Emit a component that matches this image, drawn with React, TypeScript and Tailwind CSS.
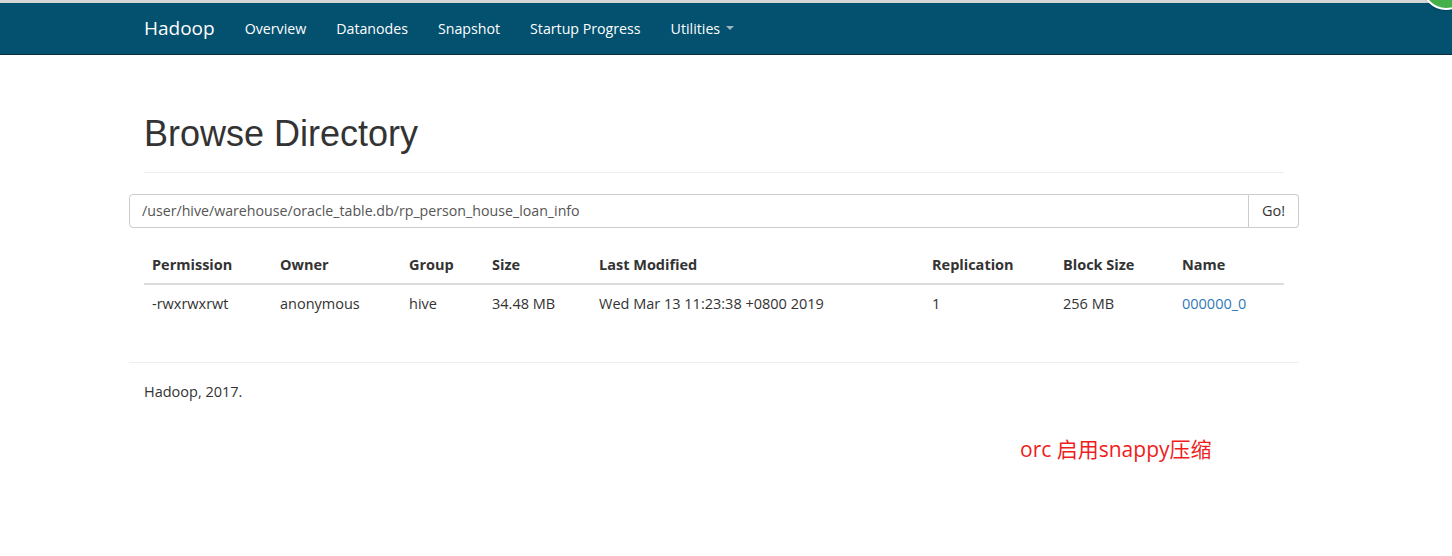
import React from "react";

const cols = [
  { label: "Permission", value: "-rwxrwxrwt", w: "w-[128px]" },
  { label: "Owner", value: "anonymous", w: "w-[129px]" },
  { label: "Group", value: "hive", w: "w-[83px]" },
  { label: "Size", value: "34.48 MB", w: "w-[107px]" },
  { label: "Last Modified", value: "Wed Mar 13 11:23:38 +0800 2019", w: "w-[333px]" },
  { label: "Replication", value: "1", w: "w-[131px]" },
  { label: "Block Size", value: "256 MB", w: "w-[119px]" },
  { label: "Name", value: "000000_0", w: "" },
];

const navItems = ["Overview", "Datanodes", "Snapshot", "Startup Progress"];

export default function App() {
  return (
    <div className="relative min-h-[556px] w-full overflow-hidden bg-white text-[#333] font-['Open_Sans','Noto_Sans',sans-serif] text-[14.5px]">
      {/* navbar */}
      <nav className="h-[55px] border-t-[3px] border-t-[#d6d6d6] border-b border-b-[#0a2f40] bg-[#03506f]">
        <div className="ml-[129px] flex h-full items-center px-[15px] text-white">
          <span className="mr-[15px] text-[19px]">Hadoop</span>
          {navItems.map((item) => (
            <span key={item} className="px-[15px] text-[14.2px]">
              {item}
            </span>
          ))}
          <span className="flex items-center gap-[6px] px-[15px] text-[14.2px]">
            Utilities
            <span className="h-0 w-0 border-x-[4px] border-t-[4px] border-x-transparent border-t-[#9fb5c0]" />
          </span>
        </div>
      </nav>

      {/* green badge peeking in the corner */}
      <div className="absolute right-[-18px] top-[-38px] h-[48px] w-[48px] rounded-full border-2 border-white bg-[#45b04a] shadow" />

      <div className="ml-[129px] w-[1170px]">
        <div className="mx-[15px] mt-[59px] border-b border-[#eee] pb-[18px]">
          <h1 className="font-['Liberation_Sans',Arial,sans-serif] text-[36px] leading-[40px] text-[#333]">
            Browse Directory
          </h1>
        </div>

        <div className="mt-[21px] flex h-[34px]">
          <div className="flex flex-1 items-center rounded-l-[4px] border border-[#ccc] px-[12px] text-[14.2px] text-[#555]">
            /user/hive/warehouse/oracle_table.db/rp_person_house_loan_info
          </div>
          <div className="flex w-[50px] items-center justify-center rounded-r-[4px] border border-l-0 border-[#ccc] bg-white text-[#333]">
            Go!
          </div>
        </div>

        <div className="mx-[15px] mt-[20px]">
          <div className="flex h-[37px] items-end border-b-2 border-[#ddd] pb-[7px] font-bold">
            {cols.map((c) => (
              <div key={c.label} className={`${c.w} px-[8px]`}>
                {c.label}
              </div>
            ))}
          </div>
          <div className="flex h-[37px] items-center">
            {cols.map((c) => (
              <div
                key={c.label}
                className={`${c.w} px-[8px] ${c.label === "Name" ? "text-[#337ab7]" : ""}`}
              >
                {c.value}
              </div>
            ))}
          </div>
        </div>

        <div className="mt-[40px] border-t border-[#eee] px-[15px] pt-[18px]">
          <p>Hadoop, 2017.</p>
        </div>
      </div>

      <div className="ml-[1020px] mt-[31px] font-['Open_Sans','Noto_Sans_CJK_SC',sans-serif] text-[21px] text-[#f01c1c]">
        orc 启用snappy压缩
      </div>
    </div>
  );
}
